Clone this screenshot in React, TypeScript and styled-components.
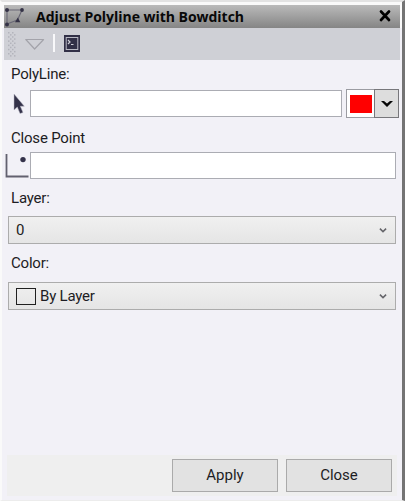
import React from "react";
import styled, { createGlobalStyle } from "styled-components";

const GlobalStyle = createGlobalStyle`
  * { box-sizing: border-box; }
  html, body { margin: 0; overflow: hidden; }
  svg { display: block; flex: none; }
`;

const Window = styled.main`
  width: 405px;
  height: 501px;
  display: flex;
  flex-direction: column;
  background: #f2f1f7;
  border-style: solid;
  border-width: 2px 3px 1px 2px;
  border-color: #e3e3e3 #747474 #ececec #fafafa;
  color: #1d1d24;
  font: 15px/20px Roboto, sans-serif;
  letter-spacing: -0.2px;
`;

const TitleBar = styled.header`
  height: 26px;
  flex: none;
  border: solid #fafafa;
  border-width: 3px 2px 0;
  background: linear-gradient(#bababa, #858585) padding-box;
  display: flex;
  align-items: center;
`;

const Title = styled.h1`
  margin: 0 0 0 10px;
  flex: 1;
  color: #080808;
  font: bold 14px/22px "Open Sans", sans-serif;
  letter-spacing: -0.03px;
  white-space: nowrap;
`;

const CloseIconButton = styled.button`
  border: 0;
  padding: 0;
  margin: 0 8px 1px 0;
  background: none;
`;

const Toolbar = styled.div`
  height: 32px;
  flex: none;
  margin: 0 2px;
  padding-bottom: 1px;
  background: #cfd0d6;
  display: flex;
  align-items: center;
`;

const Separator = styled.span`
  width: 2px;
  height: 18px;
  margin: 0 9px 2px 7px;
  background: #f8f8fa;
`;

const Form = styled.div`
  flex: 1;
  padding: 0 6px 0 3px;
  display: flex;
  flex-direction: column;
`;

const Label = styled.label<{ $top: number; $bottom: number }>`
  display: block;
  height: 20px;
  margin: ${(p) => p.$top}px 0 ${(p) => p.$bottom}px 6px;
`;

const FieldRow = styled.div<{ $overhang?: number }>`
  height: 27px;
  margin-right: ${(p) => -(p.$overhang ?? 0)}px;
  display: flex;
  align-items: flex-start;
`;

const Input = styled.input`
  flex: 1;
  min-width: 0;
  height: 27px;
  padding: 0 5px;
  border: 1px solid #abacb3;
  border-radius: 0;
  background: #fff;
  font: inherit;
  outline: none;
`;

const IconCell = styled.span`
  width: 25px;
  height: 27px;
  flex: none;
`;

const ColorPicker = styled.div`
  width: 53px;
  height: 29px;
  margin: -1px 0 0 4px;
  border: 1px solid #9b9ca2;
  background: #fff;
  display: flex;
`;

const Swatch = styled.span`
  width: 22px;
  height: 18px;
  margin: 5px 2px 0 3px;
  background: #ff0000;
`;

const DropButton = styled.button`
  flex: 1;
  padding: 0;
  border: 1px solid #77777b;
  margin: -1px -1px -1px 0;
  background: #dddddd;
  display: flex;
  align-items: center;
  justify-content: center;
`;

const Select = styled.div`
  height: 28px;
  margin-left: 3px;
  padding: 0 8px 0 7px;
  border: 1px solid #acacac;
  background: linear-gradient(#f0f0f0, #e5e5e5);
  display: flex;
  align-items: center;
`;

const SelectValue = styled.span`
  flex: 1;
`;

const ColorBox = styled.span`
  width: 20px;
  height: 17px;
  margin: 0 4px 0 0;
  border: 1.5px solid #202020;
`;

const Footer = styled.footer`
  height: 41px;
  flex: none;
  margin: 0 5px 4px 5px;
  padding: 4px 5px 0 0;
  background: #efefef;
  display: flex;
  justify-content: flex-end;
  gap: 8px;
`;

const Button = styled.button`
  width: 106px;
  height: 33px;
  padding: 0 0 2px;
  border: 1px solid #aaaaaa;
  background: #e2e2e2;
  color: inherit;
  font: inherit;
`;

const PolylineIcon = () => (
  <svg width="22" height="22" viewBox="0 0 22 22">
    <path d="M3 4H18L13.5 14M3 4V18L13.5 14" fill="none" stroke="#686775" strokeWidth="1.1" />
    <g fill="#343246">
      <circle cx="3" cy="4" r="2" />
      <circle cx="18" cy="4" r="1.9" />
      <circle cx="3" cy="18.4" r="2" />
      <path d="M13.8 11.5L16.3 16.3H11Z" />
    </g>
  </svg>
);

const CloseX = () => (
  <svg width="14" height="14" viewBox="0 0 14 14">
    <path d="M3 2.5L11 11M11 2.5L3 11" stroke="#000" strokeWidth="2.7" strokeLinecap="round" />
  </svg>
);

const dots = Array.from({ length: 12 }, (_, row) => [0, 1].map((col) => ({
  x: 4 + col * 4 + (row % 2) * 2,
  y: 2 + row * 2.1,
}))).flat();

const Grip = () => (
  <svg width="20" height="28" viewBox="0 0 20 28">
    {dots.map((dot) => (
      <rect key={`${dot.x}-${dot.y}`} x={dot.x} y={dot.y} width="1.5" height="1.5" fill="#b3b4bc" />
    ))}
  </svg>
);

const TriangleIcon = () => (
  <svg width="22" height="18" viewBox="0 0 22 18">
    <path d="M1.8 4.5H19.6L10.6 14Z" fill="none" stroke="#a3a3aa" strokeWidth="1.2" strokeLinejoin="round" />
  </svg>
);

const ConsoleIcon = () => (
  <svg width="16" height="17" viewBox="0 0 16 17">
    <rect width="16" height="17" fill="#323047" />
    <rect x="2.2" y="2.5" width="11.6" height="12" fill="none" stroke="#babac5" strokeWidth="1" />
    <path d="M4 5L6 7L4 9M7 9.5H9.5" fill="none" stroke="#d0d0d8" strokeWidth="1.2" />
  </svg>
);

const PointerIcon = () => (
  <svg width="25" height="27" viewBox="0 0 25 27">
    <path d="M9 4V20L12.3 17L15 23.6L18 22.5L15.3 16.2H19.3Z" fill="#34324a" stroke="#b5b4c0" strokeWidth=".5" />
  </svg>
);

const PointIcon = () => (
  <svg width="25" height="27" viewBox="0 0 25 27">
    <path d="M1.5 2V24.5H23.5" fill="none" stroke="#62616f" strokeWidth="1.8" />
    <circle cx="18" cy="7.6" r="2.7" fill="#34324a" />
  </svg>
);

const Chevron = () => (
  <svg width="8" height="7" viewBox="0 0 8 7">
    <path d="M.9 1.6L4 4.6L7.1 1.6" fill="none" stroke="#65656a" strokeWidth="1.5" />
  </svg>
);

const DropArrow = () => (
  <svg width="12" height="8" viewBox="0 0 12 8">
    <path d="M0 1H3L6 3.5L9 1H12L6 7Z" fill="#080808" />
  </svg>
);

export default function App() {
  return (
    <>
      <GlobalStyle />
      <Window>
        <TitleBar>
          <PolylineIcon />
          <Title>Adjust Polyline with Bowditch</Title>
          <CloseIconButton aria-label="Close window"><CloseX /></CloseIconButton>
        </TitleBar>
        <Toolbar>
          <Grip />
          <TriangleIcon />
          <Separator />
          <ConsoleIcon />
        </Toolbar>
        <Form>
          <Label htmlFor="polyline" $top={4} $bottom={6}>PolyLine:</Label>
          <FieldRow $overhang={3}>
            <IconCell><PointerIcon /></IconCell>
            <Input id="polyline" />
            <ColorPicker>
              <Swatch />
              <DropButton aria-label="Choose color"><DropArrow /></DropButton>
            </ColorPicker>
          </FieldRow>
          <Label htmlFor="point" $top={11} $bottom={4}>Close Point</Label>
          <FieldRow>
            <IconCell><PointIcon /></IconCell>
            <Input id="point" />
          </FieldRow>
          <Label $top={9} $bottom={8}>Layer:</Label>
          <Select><SelectValue>0</SelectValue><Chevron /></Select>
          <Label $top={9} $bottom={9}>Color:</Label>
          <Select><ColorBox /><SelectValue>By Layer</SelectValue><Chevron /></Select>
        </Form>
        <Footer>
          <Button>Apply</Button>
          <Button>Close</Button>
        </Footer>
      </Window>
    </>
  );
}
